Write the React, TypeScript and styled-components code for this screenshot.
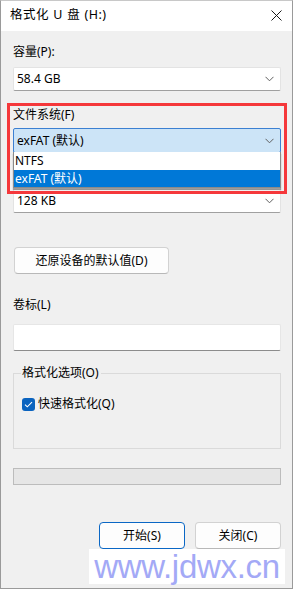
import React from "react";
import styled, { createGlobalStyle } from "styled-components";

const Global = createGlobalStyle`
  html, body { margin: 0; padding: 0; background: #ffffff; }
  body { font-family: "Noto Sans", "Noto Sans CJK SC", sans-serif; font-size: 12px; color: #000; }
  * { box-sizing: border-box; }
`;

const Window = styled.div`
  position: relative;
  width: 293px;
  height: 589px;
  border: 1px solid #9a9a9a;
  border-top-color: #c8c8c8;
  background: #f0f0f0;
  display: flex;
  flex-direction: column;
  overflow: hidden;
`;

const TitleBar = styled.div`
  height: 30px;
  background: #ffffff;
  display: flex;
  align-items: center;
  justify-content: space-between;
  padding: 0 9px 0 9px;
  font-size: 12.5px;
  line-height: 16px;
`;

const TitleText = styled.span`
  letter-spacing: 0.5px;
  word-spacing: 0.5px;
  margin-top: -2px;
`;

const CloseBtn = styled.div`
  width: 12px;
  height: 12px;
  margin-right: 1px;
  margin-top: -1px;
  display: flex;
  align-items: center;
  justify-content: center;
`;

const Body = styled.div`
  flex: 1;
  display: flex;
  flex-direction: column;
  padding: 0 11px 0 12px;
`;

const Label = styled.div<{ $mt: number }>`
  margin-top: ${(p) => p.$mt}px;
  line-height: 16px;
  height: 16px;
  white-space: nowrap;
`;

const Spacer = styled.div<{ $h: number }>`
  height: ${(p) => p.$h}px;
  flex-shrink: 0;
`;

const Combo = styled.div<{ $mt: number; $focused?: boolean }>`
  position: relative;
  margin-top: ${(p) => p.$mt}px;
  height: ${(p) => (p.$focused ? 25 : 24)}px;
  background: ${(p) => (p.$focused ? "#cce4f7" : "#ffffff")};
  border: 1px solid ${(p) => (p.$focused ? "#3c80d2" : "#e3e3e3")};
  border-bottom-color: ${(p) => (p.$focused ? "#3c80d2" : "#a0a0a0")};
  border-radius: 2px;
  display: flex;
  align-items: center;
  justify-content: space-between;
  padding: 0 6px 0 3px;
  line-height: 16px;
`;

const Chevron = () => (
  <svg width="9" height="6" viewBox="0 0 9 6">
    <path d="M0.5 0.8 L4.5 4.8 L8.5 0.8" fill="none" stroke="#606060" strokeWidth="1" />
  </svg>
);

const DropList = styled.div`
  position: absolute;
  top: 100%;
  left: -1px;
  right: -1px;
  background: #ffffff;
  border: 1px solid #8a8a8a;
  border-top: none;
  box-shadow: 0 2px 1px rgba(0, 0, 0, 0.35);
  z-index: 2;
`;

const Option = styled.div<{ $selected?: boolean }>`
  height: ${(p) => (p.$selected ? 17 : 18)}px;
  line-height: 17px;
  padding-left: 1px;
  background: ${(p) => (p.$selected ? "#0078d7" : "#ffffff")};
  color: ${(p) => (p.$selected ? "#ffffff" : "#000000")};
`;

const FsSection = styled.div`
  position: relative;
  display: flex;
  flex-direction: column;
`;

const RedFrame = styled.div`
  position: absolute;
  top: 12px;
  left: -6px;
  right: -6px;
  height: 91px;
  border: 3px solid #f5383b;
  z-index: 3;
  pointer-events: none;
`;

const PushButton = styled.div<{ $width: number; $default?: boolean }>`
  width: ${(p) => p.$width}px;
  height: 27px;
  background: #fdfdfd;
  border: 1px solid ${(p) => (p.$default ? "#0a67c5" : "#d2d2d2")};
  border-bottom-color: ${(p) => (p.$default ? "#0a67c5" : "#b8b8b8")};
  border-radius: 4px;
  display: flex;
  align-items: center;
  justify-content: center;
  line-height: 16px;
  white-space: nowrap;
`;

const RestoreRow = styled.div`
  margin-top: 34px;
  padding-left: 1px;
  display: flex;
`;

const TextBox = styled.div`
  margin-top: 11px;
  height: 27px;
  background: #ffffff;
  border: 1px solid #e6e6e6;
  border-bottom-color: #8c8c8c;
  border-radius: 2px;
`;

const GroupBox = styled.div`
  position: relative;
  margin-top: 22px;
  height: 76px;
  border: 1px solid #dadada;
  padding: 22px 0 0 8px;
`;

const Legend = styled.div`
  position: absolute;
  top: -9px;
  left: 7px;
  padding: 0 2px 0 1px;
  background: #f0f0f0;
  line-height: 16px;
`;

const CheckRow = styled.div`
  display: flex;
  align-items: center;
  gap: 3px;
  height: 16px;
  line-height: 16px;
`;

const CheckBoxMark = styled.div`
  width: 13px;
  height: 13px;
  border-radius: 3px;
  background: #0a63bf;
  display: flex;
  align-items: center;
  justify-content: center;
`;

const Progress = styled.div`
  margin-top: 19px;
  height: 17px;
  background: #e6e6e6;
  border: 1px solid #bcbcbc;
`;

const ButtonRow = styled.div`
  margin-top: 37px;
  display: flex;
  justify-content: flex-end;
  gap: 10px;
`;

const Watermark = styled.div`
  position: absolute;
  right: 7px;
  bottom: 4px;
  width: 196px;
  height: 35px;
  background: #ffffff;
  display: flex;
  align-items: center;
  justify-content: center;
  font-family: "Liberation Sans", Arial, sans-serif;
  font-size: 33px;
  color: #a3a9f6;
  letter-spacing: -0.3px;
  z-index: 4;
`;

const Check = () => (
  <svg width="9" height="7" viewBox="0 0 9 7">
    <path d="M1 3.6 L3.3 5.8 L8 1.2" fill="none" stroke="#ffffff" strokeWidth="1.1" />
  </svg>
);

export default function App() {
  return (
    <>
      <Global />
      <Window>
        <TitleBar>
          <TitleText>格式化 U 盘 (H:)</TitleText>
          <CloseBtn>
            <svg width="11" height="11" viewBox="0 0 11 11">
              <path d="M0.5 0.5 L10.5 10.5 M10.5 0.5 L0.5 10.5" stroke="#1a1a1a" strokeWidth="1" fill="none" />
            </svg>
          </CloseBtn>
        </TitleBar>
        <Body>
          <Label $mt={13}>容量(P):</Label>
          <Combo $mt={7}>
            <span>58.4 GB</span>
            <Chevron />
          </Combo>
          <FsSection>
            <Label $mt={16}>文件系统(F)</Label>
            <Combo $mt={5} $focused>
              <span>exFAT (默认)</span>
              <Chevron />
              <DropList>
                <Option>NTFS</Option>
                <Option $selected>exFAT (默认)</Option>
              </DropList>
            </Combo>
            <RedFrame />
          </FsSection>
          <Spacer $h={36} />
          <Combo $mt={0}>
            <span>128 KB</span>
            <Chevron />
          </Combo>
          <RestoreRow>
            <PushButton $width={155}>还原设备的默认值(D)</PushButton>
          </RestoreRow>
          <Label $mt={23}>卷标(L)</Label>
          <TextBox />
          <GroupBox>
            <Legend>格式化选项(O)</Legend>
            <CheckRow>
              <CheckBoxMark>
                <Check />
              </CheckBoxMark>
              <span>快速格式化(Q)</span>
            </CheckRow>
          </GroupBox>
          <Progress />
          <ButtonRow>
            <PushButton $width={86} $default>开始(S)</PushButton>
            <PushButton $width={86}>关闭(C)</PushButton>
          </ButtonRow>
        </Body>
        <Watermark>www.jdwx.cn</Watermark>
      </Window>
    </>
  );
}
